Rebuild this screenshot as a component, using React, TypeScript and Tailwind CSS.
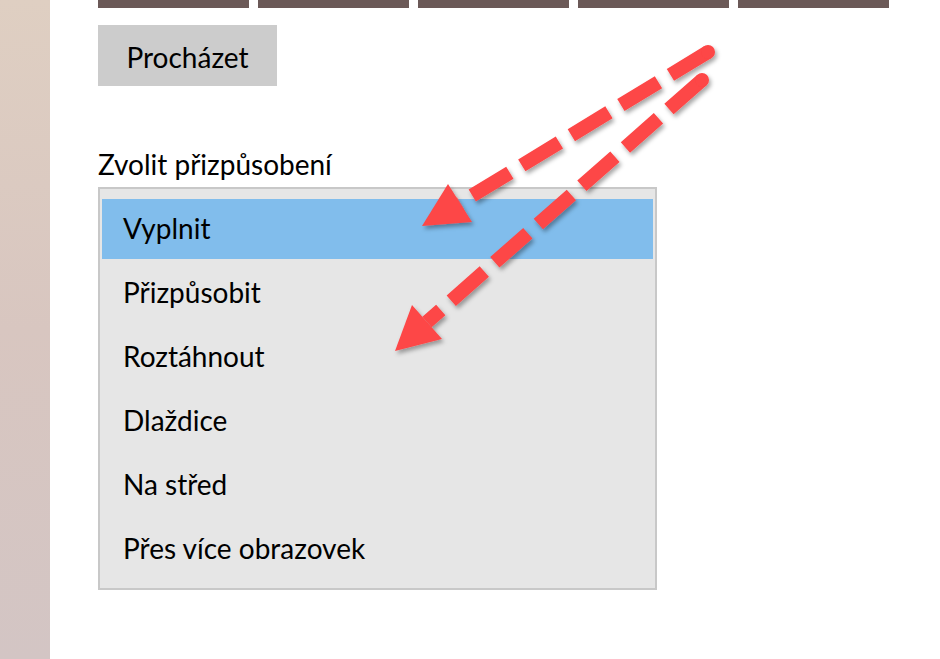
const options = [
  'Vyplnit',
  'Přizpůsobit',
  'Roztáhnout',
  'Dlaždice',
  'Na střed',
  'Přes více obrazovek',
];

export default function App() {
  const selected = 0;

  return (
    <div className="relative flex h-[659px] w-[940px] overflow-hidden bg-white font-['Lato',sans-serif] text-[28px] text-black">
      {/* wallpaper edge */}
      <div className="w-[50px] shrink-0 bg-linear-to-b from-[#dfcfc2] via-[#d8c6c0] to-[#d3c5c4]" />

      <div className="flex flex-col pl-[48px]">
        {/* recent pictures */}
        <div className="flex gap-[9px]">
          {[0, 1, 2, 3, 4].map((i) => (
            <div key={i} className="h-[8px] w-[151px] bg-[#6b5957]" />
          ))}
        </div>

        <button className="mt-[17px] flex h-[61px] w-[179px] items-center justify-center bg-[#cccccc] pt-[3px] leading-none">
          Procházet
        </button>

        <div className="mt-[59px] h-[38px] leading-[38px]">Zvolit přizpůsobení</div>

        <div className="mt-[4px] flex w-[559px] flex-col gap-[4px] border-2 border-[#c8c8c8] bg-[#e6e6e6] px-[2px] pt-[10px] pb-[9px]">
          {options.map((opt, i) => (
            <div
              key={opt}
              className={`flex h-[60px] items-center pb-[3px] pl-[21px] leading-none ${
                i === selected ? 'bg-[#81bdec]' : ''
              }`}
            >
              {opt}
            </div>
          ))}
        </div>
      </div>

      {/* annotation arrows */}
      <svg className="pointer-events-none absolute inset-0" width="940" height="659" viewBox="0 0 940 659">
        <defs>
          <filter id="shadow" x="-20%" y="-20%" width="140%" height="140%">
            <feDropShadow dx="2" dy="3" stdDeviation="2" floodColor="#000" floodOpacity="0.35" />
          </filter>
        </defs>
        <g filter="url(#shadow)" fill="#fd4646" stroke="#fd4646">
          <line x1="708" y1="52" x2="460" y2="203" strokeWidth="14" strokeDasharray="44 14" />
          <circle cx="708" cy="52" r="7" stroke="none" />
          <polygon points="422,226 448,184 472,222" stroke="none" />

          <line x1="702" y1="80" x2="427" y2="322" strokeWidth="14" strokeDasharray="44 14" />
          <circle cx="702" cy="80" r="7" stroke="none" />
          <polygon points="395,351 412,305 442,339" stroke="none" />
        </g>
      </svg>
    </div>
  );
}
